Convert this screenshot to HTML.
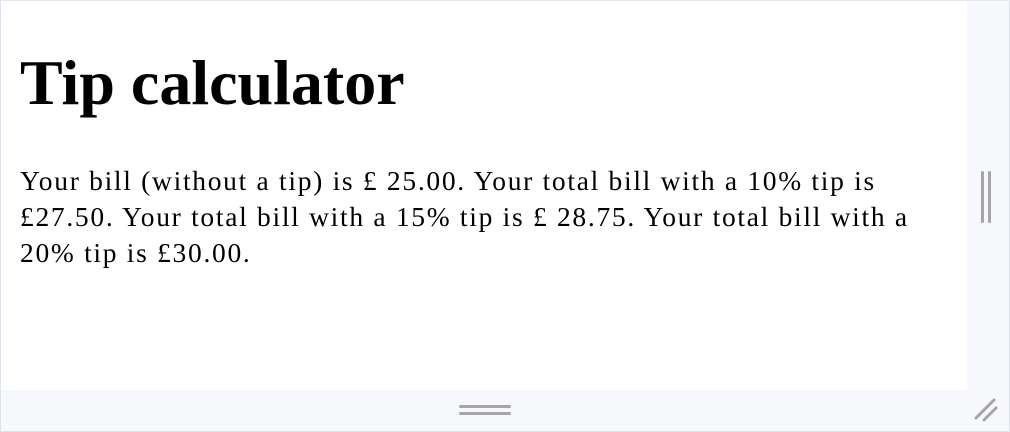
<!DOCTYPE html>
<html><head><style>
html,body{margin:0;padding:0;}
body{width:1010px;height:432px;position:relative;overflow:hidden;background:#f7f8fc;font-family:"Liberation Serif",serif;color:#000;}
.frame{position:absolute;left:0;top:0;width:1008px;height:430px;border:1px solid #dde2ec;border-top-color:#e4e7ef;background:#f7f8fc;}
.main{position:absolute;left:1px;top:1px;width:966px;height:389px;background:#fff;}
h1{position:absolute;left:20px;top:46px;margin:0;font-size:64px;line-height:73px;font-weight:bold;white-space:nowrap;}
p{position:absolute;left:20px;top:163px;margin:0;font-size:27.5px;line-height:36px;white-space:nowrap;letter-spacing:1.7px;}
.vh{position:absolute;top:171px;width:3px;height:52px;background:#a6a6a6;border-radius:2px;}
.hh{position:absolute;left:459px;width:52px;height:3px;background:#a6a6a6;border-radius:2px;}
</style></head><body>
<div class="frame"></div>
<div class="main"></div>
<h1>Tip calculator</h1>
<p>Your bill (without a tip) is £ 25.00. Your total bill with a 10% tip is<br>£27.50. Your total bill with a 15% tip is £ 28.75. Your total bill with a<br>20% tip is £30.00.</p>
<div class="vh" style="left:981px"></div>
<div class="vh" style="left:988px"></div>
<div class="hh" style="top:405px"></div>
<div class="hh" style="top:412px"></div>
<svg style="position:absolute;left:972px;top:396px" width="30" height="30"><path d="M4 22 L22 4 M12 24 L24 12" stroke="#a6a6a6" stroke-width="3" stroke-linecap="round"/></svg>
</body></html>
